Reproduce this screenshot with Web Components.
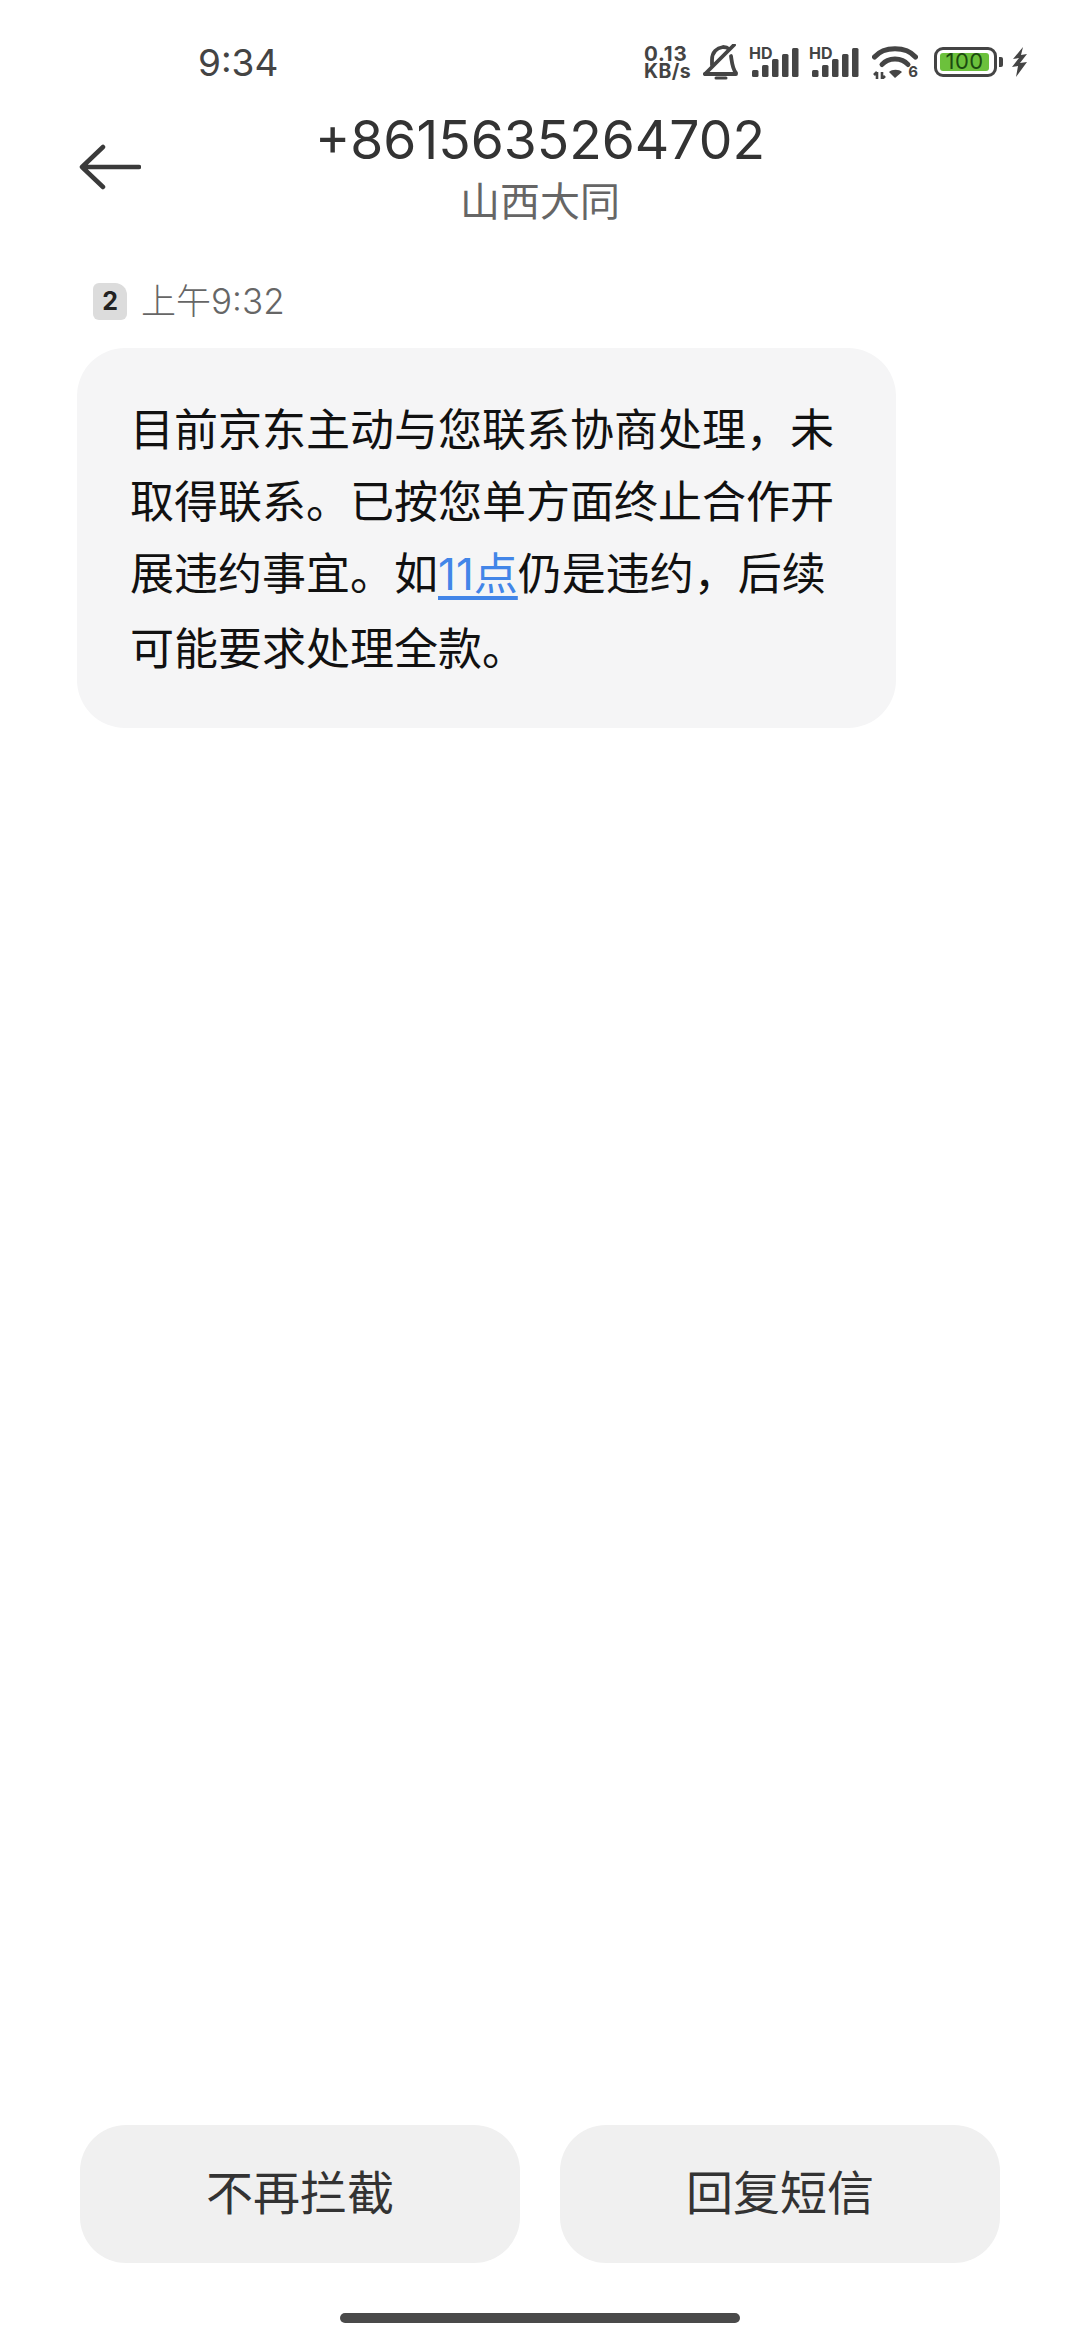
<!DOCTYPE html>
<html lang="zh-CN"><head><meta charset="utf-8"><title>短信</title>
<style>
html,body{margin:0;padding:0;background:#fff}
body{width:1080px;height:2340px;overflow:hidden;font-family:Inter,"Noto Sans CJK SC",sans-serif}
</style></head><body>
<sms-screen>
  <status-bar slot="top"></status-bar>
  <nav-header slot="top" number="+8615635264702" region="山西大同"></nav-header>
  <message-meta slot="top" count="2" time="上午9:32"></message-meta>
  <message-bubble slot="top">目前京东主动与您联系协商处理，未取得联系。已按您单方面终止合作开展违约事宜。如<a>11点</a>仍是违约，后续可能要求处理全款。</message-bubble>
  <action-bar slot="bottom">
    <action-button>不再拦截</action-button>
    <action-button>回复短信</action-button>
  </action-bar>
  <home-indicator slot="bottom"></home-indicator>
</sms-screen>
<script>
function def(name,html){
  customElements.define(name,class extends HTMLElement{
    constructor(){super();this.attachShadow({mode:'open'});}
    connectedCallback(){this.shadowRoot.innerHTML=typeof html==='function'?html(this):html;}
  });
}
const FONT='Inter,"Noto Sans CJK SC",sans-serif';
def('sms-screen',`<style>
:host{display:flex;flex-direction:column;justify-content:space-between;width:1080px;height:2340px;background:#fff;font-family:${FONT}}
.t,.b{display:flex;flex-direction:column}
</style><div class="t"><slot name="top"></slot></div><div class="b"><slot name="bottom"></slot></div>`);

const signal=`<span style="display:flex;flex-direction:column;width:50px;height:34px;position:relative">
<span style="font:700 16px/16px Inter,sans-serif;color:#444;height:16px;letter-spacing:0">HD</span>
<svg width="50" height="34" viewBox="0 0 50 34" style="position:absolute;left:0;top:0"><g fill="#444"><rect x="3" y="25" width="6.5" height="7" rx="1.5"/><rect x="13" y="20" width="6.5" height="12" rx="1.5"/><rect x="23" y="14" width="6.5" height="18" rx="1.5"/><rect x="33" y="9" width="6.5" height="23" rx="1.5"/><rect x="43" y="3" width="6.5" height="29" rx="1.5"/></g></svg></span>`;

def('status-bar',`<style>
:host{display:flex;align-items:center;height:100px;box-sizing:border-box;padding:24px 53px 0 198px;color:#444}
.time{font:400 37px/1 ${FONT};color:#444;flex:1}
.icons{display:flex;align-items:center}
.speed{display:flex;flex-direction:column;font-family:${FONT};font-weight:700;color:#444;width:59px;white-space:nowrap}
.speed b{font-size:20.5px;line-height:18px;font-weight:700;letter-spacing:.8px}
.speed i{font-style:normal;font-size:19.500px;line-height:16px;letter-spacing:.4px}
svg{display:block}
.bat{display:flex;align-items:center;margin-right:9px}
.shell{box-sizing:border-box;width:63px;height:30px;border:3.500px solid #444;border-radius:9px;padding:3px 5px 3px 3px;display:flex}
.lvl{flex:1;background:#6cc13c;border-radius:3px;font:400 22px/17px ${FONT};color:#1c4a10;text-align:center;white-space:nowrap;letter-spacing:.4px}
.nub{width:4px;height:10px;background:#444;border-radius:0 2px 2px 0;margin-left:2px}
</style>
<span class="time">9:34</span>
<div class="icons">
<div class="speed"><b>0.13</b><i>KB/s</i></div>
<svg width="36" height="36" viewBox="0 0 36 36" fill="none" stroke="#444" stroke-width="3.800" stroke-linecap="round" stroke-linejoin="round" style="margin-right:10px"><path d="M9 21V16C9 8 14 4 20 3c2 0 4 0 6 2"/><path d="M28 12c1 6 1 12 5 17v1H2"/><path d="M31 1 2 30"/><path d="M13 34h10" stroke-width="3"/></svg>
<span style="margin-right:10px">${signal}</span>
<span style="margin-right:13px">${signal}</span>
<span style="position:relative;display:block;width:46px;height:34px;margin-right:16px">
<svg width="46" height="34" viewBox="0 0 46 34" fill="none" stroke="#444" stroke-linecap="round" style="position:absolute;left:0;top:0"><path d="M2.500 12C12 1 34 1 43.500 12" stroke-width="5"/><path d="M10 19.500C16 12 30 12 36 19.500" stroke-width="5"/><path d="M23 33l-6-6c3-3 10-3 13 0z" fill="#444" stroke="none"/><path d="M5 27v7M2 30l3-3M10 27v7M10 34l3-3" stroke-width="2.600" stroke-linecap="butt"/></svg>
<span style="position:absolute;right:0;bottom:0;font:700 15px/15px Inter,sans-serif;color:#444">6</span></span>
<div class="bat"><div class="shell"><div class="lvl">100</div></div><div class="nub"></div></div>
<svg width="15" height="30" viewBox="0 0 15 30"><path d="M11 0 1 12l6-1-7 9 6-1-2 11 11-15-7 1 7-9-6 1z" fill="#444"/></svg>
</div>`);

def('nav-header',h=>`<style>
:host{display:block;position:relative;height:132px}
.a{position:absolute;left:79px;top:44px;display:block}
.c{display:flex;flex-direction:column;align-items:center}
.n{font:400 53.400px/66px ${FONT};color:#333;margin-top:7px}
.r{font:400 40px/50px "Noto Sans CJK SC",sans-serif;color:#666;margin-top:1px}
</style>
<svg class="a" width="62" height="46" viewBox="0 0 62 46" fill="none" stroke="#3a3a3a" stroke-width="4.500" stroke-linecap="round" stroke-linejoin="round"><path d="M60 23H3M24 3 3 23l21 20"/></svg>
<div class="c"><div class="n">${h.getAttribute('number')}</div><div class="r">${h.getAttribute('region')}</div></div>`);

def('message-meta',h=>`<style>
:host{display:flex;align-items:center;height:48px;margin:45px 0 0 93px}
.b{box-sizing:border-box;width:34px;height:37px;background:#dcdcdc;border-radius:6px 12px 6px 6px;font:700 25px/37px ${FONT};color:#222;text-align:center}
.t{font:300 35px/48px ${FONT};color:#666;margin-left:14px}
</style><span class="b">${h.getAttribute('count')}</span><span class="t">${h.getAttribute('time')}</span>`);

def('message-bubble',`<style>
:host{display:block;box-sizing:border-box;width:819px;height:380px;margin:23px 0 0 77px;padding:43px 53px 0;background:#f5f5f6;border-radius:48px;font:400 44px/72px "Noto Sans CJK SC",sans-serif;color:#111}
::slotted(a){color:#4285e8;text-decoration:underline;font-family:${FONT};text-underline-offset:6px}
</style><slot></slot>`);

def('action-bar',`<style>:host{display:flex;justify-content:space-between;margin:0 80px}</style><slot></slot>`);
def('action-button',`<style>
:host{display:flex;align-items:center;justify-content:center;width:440px;height:138px;padding-bottom:10px;box-sizing:border-box;background:#f0f0f0;border-radius:46px;font:400 47px/1 "Noto Sans CJK SC",sans-serif;color:#333}
</style><slot></slot>`);
def('home-indicator',`<style>
:host{display:block;width:400px;height:10px;margin:50px auto 17px;background:#4a4a4a;border-radius:5px}
</style>`);
</script>
</body></html>
